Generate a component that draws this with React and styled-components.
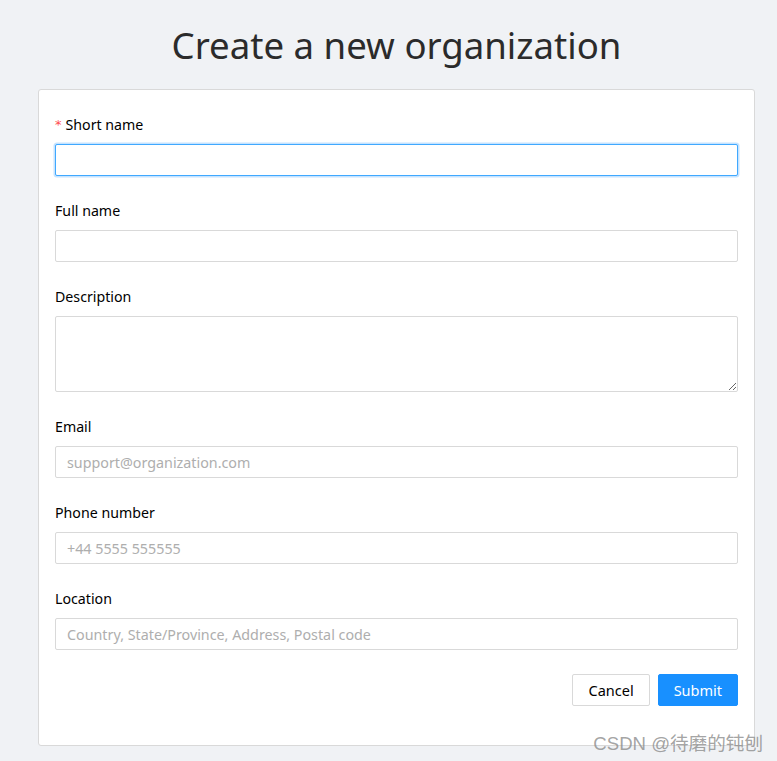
import React from "react";
import styled, { createGlobalStyle } from "styled-components";

const Global = createGlobalStyle`
  html, body { margin: 0; padding: 0; background: #f0f2f5; }
  body { font-family: "Noto Sans", "Open Sans", sans-serif; }
  * { box-sizing: border-box; }
`;

const Page = styled.div`
  position: relative;
  min-height: 761px;
  padding: 0 22px 0 38px;
  overflow: hidden;
`;

const Title = styled.h1`
  margin: 0;
  padding: 18px 0 17px;
  text-align: center;
  font-family: "Noto Sans", sans-serif;
  font-weight: 400;
  font-size: 36.6px;
  line-height: 54px;
  color: #2b2b2b;
`;

const Card = styled.form`
  background: #fff;
  border: 1px solid #d9d9d9;
  border-radius: 3px;
  padding: 24px 16px 39px;
  display: flex;
  flex-direction: column;
`;

const Field = styled.div`
  display: flex;
  flex-direction: column;
  margin-bottom: 24px;
`;

const Label = styled.label`
  display: flex;
  align-items: center;
  height: 22px;
  padding-bottom: 2px;
  margin-bottom: 8px;
  font-size: 14.2px;
  color: #000;
`;

const Star = styled.span`
  color: #ff4d4f;
  font-size: 13px;
  margin-right: 4px;
  font-family: "DejaVu Sans", sans-serif;
`;

const inputBase = `
  width: 100%;
  border: 1px solid #d9d9d9;
  border-radius: 2px;
  padding: 4px 11px;
  font-family: "Noto Sans", sans-serif;
  font-size: 14.3px;
  color: #000;
  outline: none;
  background: #fff;
  &::placeholder { color: #aeaeae; }
`;

const Input = styled.input`
  ${inputBase}
  height: 32px;
  ${(p) =>
    p.$focused &&
    `border-color: #40a9ff; box-shadow: 0 0 0 1.5px rgba(24,144,255,0.25);`}
`;

const TextArea = styled.textarea`
  ${inputBase}
  height: 76px;
  display: block;
  resize: vertical;
`;

const Actions = styled.div`
  display: flex;
  justify-content: flex-end;
  gap: 8px;
`;

const Button = styled.button`
  height: 32px;
  padding: 0 15px;
  border-radius: 2px;
  font-family: "Noto Sans", sans-serif;
  font-size: 14.5px;
  cursor: pointer;
  border: 1px solid ${(p) => (p.$primary ? "#1890ff" : "#d9d9d9")};
  background: ${(p) => (p.$primary ? "#1890ff" : "#fff")};
  color: ${(p) => (p.$primary ? "#fff" : "#000")};
  min-width: ${(p) => (p.$primary ? "80px" : "77px")};
`;

const Watermark = styled.div`
  position: absolute;
  right: 14px;
  bottom: 6px;
  font-family: "Liberation Sans", "Noto Sans CJK SC", sans-serif;
  font-size: 18.6px;
  color: rgba(140, 140, 140, 0.8);
`;

export default function App() {
  return (
    <>
      <Global />
      <Page>
        <Title>Create a new organization</Title>
        <Card onSubmit={(e) => e.preventDefault()}>
          <Field>
            <Label>
              <Star>*</Star>Short name
            </Label>
            <Input $focused />
          </Field>
          <Field>
            <Label>Full name</Label>
            <Input />
          </Field>
          <Field>
            <Label>Description</Label>
            <TextArea />
          </Field>
          <Field>
            <Label>Email</Label>
            <Input placeholder="support@organization.com" />
          </Field>
          <Field>
            <Label>Phone number</Label>
            <Input placeholder="+44 5555 555555" />
          </Field>
          <Field>
            <Label>Location</Label>
            <Input placeholder="Country, State/Province, Address, Postal code" />
          </Field>
          <Actions>
            <Button type="button">Cancel</Button>
            <Button type="submit" $primary>
              Submit
            </Button>
          </Actions>
        </Card>
        <Watermark>CSDN @待磨的钝刨</Watermark>
      </Page>
    </>
  );
}
